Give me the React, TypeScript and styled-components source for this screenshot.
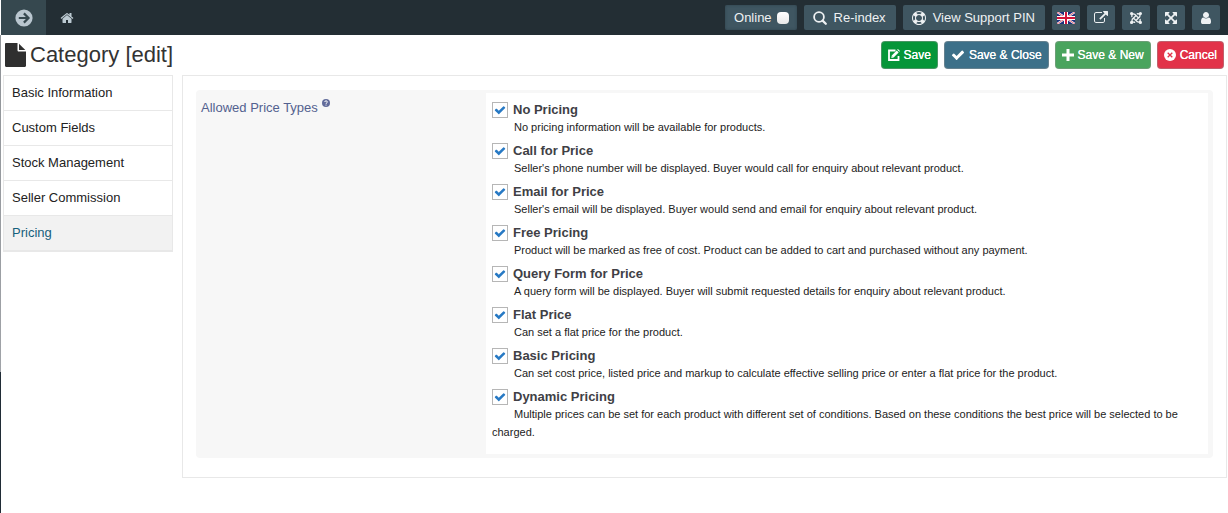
import React from 'react';
import styled, { createGlobalStyle, css } from 'styled-components';

const GlobalStyle = createGlobalStyle`
  *, *::before, *::after { box-sizing: border-box; }
  body {
    margin: 0;
    background: #fff;
    color: #393939;
    font: 13px/18px "Liberation Sans", Arial, Helvetica, sans-serif;
  }
  button, input { font: inherit; margin: 0; }
  svg { display: block; flex: none; }
`;

const Shell = styled.div`
  min-height: 100vh;
  padding-left: 1px;
  background: linear-gradient(#fff 35px, #909498 35px, #a0a3a8 372px, #202c36 372px) 0 0 / 1px 100% no-repeat;
`;

const TopBar = styled.header`
  display: flex;
  align-items: center;
  height: 35px;
  padding-right: 8px;
  background: #232e34;
  color: #eef1f3;
`;

const MenuToggle = styled.button`
  display: flex;
  align-items: center;
  justify-content: center;
  width: 45px;
  height: 35px;
  padding: 0;
  border: 0;
  background: #36484f;
  color: #b9c6cf;
`;

const HomeLink = styled.a`
  padding: 0 14px;
  color: #bccad2;
`;

const Tools = styled.div`
  display: flex;
  gap: 7px;
  margin-left: auto;
`;

const toolLook = css`
  display: flex;
  align-items: center;
  justify-content: center;
  height: 25px;
  border: 0;
  border-radius: 2px;
  background: #3f5661;
  color: #eef1f3;
  white-space: nowrap;
`;

const Tool = styled.button<{ $square?: boolean }>`
  ${toolLook}
  gap: 7px;
  padding: ${(p) => (p.$square ? '0' : '0 10px 0 9px')};
  width: ${(p) => (p.$square ? '28px' : 'auto')};
`;

const OnlineSwitch = styled.label`
  ${toolLook}
  gap: 5px;
  padding: 0 8px 0 9px;
  box-shadow: inset 0 0 3px #2f434d;
`;

const OnlineBox = styled.input`
  appearance: none;
  width: 12px;
  height: 12px;
  border-radius: 4px;
  background: linear-gradient(#fff, #e8e8e8);
`;

const TitleRow = styled.div`
  display: flex;
  align-items: center;
  height: 40px;
  padding: 0 4px;
`;

const Title = styled.h1`
  display: flex;
  align-items: center;
  gap: 4px;
  margin: 0;
  color: #333;
  font-size: 22px;
  line-height: 40px;
  font-weight: 400;
`;

const Actions = styled.div`
  display: flex;
  gap: 6px;
  margin-left: auto;
`;

const Action = styled.button<{ $color: string }>`
  display: flex;
  align-items: center;
  gap: 4px;
  height: 28px;
  padding: 0 6px;
  border: 1px solid rgba(150, 150, 150, 0.45);
  border-radius: 4px;
  background: ${(p) => p.$color};
  color: #fff;
  font-size: 12px;
  text-shadow: 0 0 0 #fff;
  white-space: nowrap;
`;

const Body = styled.div`
  display: flex;
  align-items: flex-start;
  gap: 9px;
  padding: 0 1px 0 2px;
`;

const Side = styled.nav`
  flex: none;
  width: 170px;
  border: 1px solid #e8e8e8;
  border-bottom-width: 2px;
`;

const SideLink = styled.a<{ $active?: boolean }>`
  display: block;
  height: 35px;
  padding: 0 8px;
  line-height: 34px;
  color: ${(p) => (p.$active ? '#16607c' : '#222')};
  background: ${(p) => (p.$active ? '#f2f2f2' : '#fff')};
  text-decoration: none;

  & + & { border-top: 1px solid #e8e8e8; }
  &:first-child { height: 34px; }
`;

const Panel = styled.main`
  flex: 1;
  min-width: 0;
  padding: 14px 13px 19px;
  border: 1px solid #e8e8e8;
`;

const Field = styled.fieldset`
  display: grid;
  grid-template-columns: 285px minmax(0, 1fr);
  margin: 0;
  min-width: 0;
  padding: 3px 5px 4px;
  border: 0;
  border-radius: 4px;
  background: #f7f7f7;
`;

const FieldName = styled.div`
  display: flex;
  gap: 4px;
  padding-top: 6px;
  color: #53618f;
`;

const Help = styled.span`
  color: #626c9b;
`;

const Options = styled.div`
  display: grid;
  gap: 7px;
  padding: 9px 6px 13px;
  background: #fff;
`;

const OptionLabel = styled.label`
  display: flex;
  align-items: center;
  gap: 5px;
  height: 16px;
  color: #404045;
  font-weight: 700;
`;

const Tick = styled.span`
  display: grid;
  width: 16px;
  height: 16px;
  color: #2779c4;

  & > * { grid-area: 1 / 1; place-self: center; pointer-events: none; }
`;

const TickInput = styled.input`
  && { pointer-events: auto; }
  appearance: none;
  width: 16px;
  height: 16px;
  border: 1px solid #b6b6b6;
  background: #fff;

  &:not(:checked) + svg { visibility: hidden; }
`;

const OptionText = styled.p`
  margin: 0;
  color: #222;
  font-size: 11px;
  line-height: 18px;
  text-indent: 22px;
`;

const PATHS = {
  home: 'M1472 992v480q0 26-19 45t-45 19h-384v-384h-256v384h-384q-26 0-45-19t-19-45v-480q0-1 .5-3t.5-3l575-474 575 474q1 2 1 6zm223-69l-62 74q-8 9-21 11h-3q-13 0-21-7l-692-577-692 577q-12 8-24 7-13-2-21-11l-62-74q-8-10-7-23.5t11-21.5l719-599q32-26 76-26t76 26l244 204v-195q0-14 9-23t23-9h192q14 0 23 9t9 23v408l219 182q10 8 11 21.5t-7 23.5z',
  user: 'M1536 1399q0 109-62.5 187t-150.5 78h-854q-88 0-150.5-78t-62.5-187q0-85 8.5-160.5t31.5-152 58.5-131 94-89 134.5-34.5q131 128 313 128t313-128q76 0 134.5 34.5t94 89 58.5 131 31.5 152 8.5 160.5zm-256-887q0 159-112.5 271.5t-271.5 112.5-271.5-112.5-112.5-271.5 112.5-271.5 271.5-112.5 271.5 112.5 112.5 271.5z',
  check: 'M1671 566q0 40-28 68l-724 724-136 136q-28 28-68 28t-68-28l-136-136-362-362q-28-28-28-68t28-68l136-136q28-28 68-28t68 28l294 295 656-657q28-28 68-28t68 28l136 136q28 28 28 68z',
  external: 'M1408 928v320q0 119-84.5 203.5t-203.5 84.5h-832q-119 0-203.5-84.5t-84.5-203.5v-832q0-119 84.5-203.5t203.5-84.5h704q14 0 23 9t9 23v64q0 14-9 23t-23 9h-704q-66 0-113 47t-47 113v832q0 66 47 113t113 47h832q66 0 113-47t47-113v-320q0-14 9-23t23-9h64q14 0 23 9t9 23zm384-864v512q0 26-19 45t-45 19-45-19l-176-176-652 652q-10 10-23 10t-23-10l-114-114q-10-10-10-23t10-23l652-652-176-176q-19-19-19-45t19-45 45-19h512q26 0 45 19t19 45z',
  ring: 'M896 0q182 0 348 71t286 191 191 286 71 348-71 348-191 286-286 191-348 71-348-71-286-191-191-286-71-348 71-348 191-286 286-191 348-71zm0 128q-190 0-361 90l194 194q82-28 167-28t167 28l194-194q-171-90-361-90zm-678 1129l194-194q-28-82-28-167t28-167l-194-194q-90 171-90 361t90 361zm678 407q190 0 361-90l-194-194q-82 28-167 28t-167-28l-194 194q171 90 361 90zm0-384q159 0 271.5-112.5t112.5-271.5-112.5-271.5-271.5-112.5-271.5 112.5-112.5 271.5 112.5 271.5 271.5 112.5zm484-217l194 194q90-171 90-361t-90-361l-194 194q28 82 28 167t-28 167z',
  expand: 'M1411 541l-355 355 355 355 144-144q29-31 70-14 39 17 39 59v448q0 26-19 45t-45 19h-448q-42 0-59-40-17-39 14-69l144-144-355-355-355 355 144 144q31 30 14 69-17 40-59 40h-448q-26 0-45-19t-19-45v-448q0-42 40-59 39-17 69 14l144 144 355-355-355-355-144 144q-19 19-45 19-12 0-24-5-40-17-40-59v-448q0-26 19-45t45-19h448q42 0 59 40 17 39-14 69l-144 144 355 355 355-355-144-144q-31-30-14-69 17-40 59-40h448q26 0 45 19t19 45v448q0 42-39 59-13 5-25 5-26 0-45-19z',
};

const Glyph = ({ name, size }: { name: keyof typeof PATHS; size: number }) => (
  <svg width={size} height={size} viewBox="0 0 1792 1792" fill="currentColor" fillRule="evenodd" aria-hidden="true">
    <path d={PATHS[name]} />
  </svg>
);

const ArrowCircleIcon = () => (
  <svg width="18" height="18" viewBox="0 0 18 18" aria-hidden="true">
    <circle cx="9" cy="9" r="8.6" fill="currentColor" />
    <path d="M3.8 9h9.4M8.9 4.4 13.5 9l-4.6 4.6" fill="none" stroke="#36484f" strokeWidth="2.2" />
  </svg>
);

const SearchIcon = () => (
  <svg width="14" height="14" viewBox="0 0 14 14" fill="none" stroke="currentColor" aria-hidden="true">
    <circle cx="6" cy="6" r="4.9" strokeWidth="1.8" />
    <path d="m9.6 9.6 3.2 3.2" strokeWidth="2.2" strokeLinecap="round" />
  </svg>
);

const FlagIcon = () => (
  <svg width="18" height="12" viewBox="0 0 18 12" aria-hidden="true">
    <path fill="#1c2f7c" d="M0 0h18v12H0z" />
    <path d="m0 0 18 12M18 0 0 12" stroke="#fff" strokeWidth="2" />
    <path d="m0 0 18 12M18 0 0 12" stroke="#d2243b" strokeWidth="0.7" />
    <path d="M9 0v12M0 6h18" stroke="#fff" strokeWidth="4" />
    <path d="M9 0v12M0 6h18" stroke="#d2143a" strokeWidth="2" />
  </svg>
);

const JoomlaIcon = () => (
  <svg width="12" height="12" viewBox="0 0 12 12" fill="none" stroke="currentColor" strokeWidth="1.3" aria-hidden="true">
    <g fill="currentColor" stroke="none">
      <circle cx="1.6" cy="1.6" r="1.6" />
      <circle cx="10.4" cy="1.6" r="1.6" />
      <circle cx="1.6" cy="10.4" r="1.6" />
      <circle cx="10.4" cy="10.4" r="1.6" />
    </g>
    <path d="M1.9 5.2C1.3 2.8 2.8 1.3 4.8 2.3L8.8 6.3M6.8 1.9C9.2 1.3 10.7 2.8 9.7 4.8L5.7 8.8M10.1 6.8c.6 2.4-.9 3.9-2.9 2.9L3.2 5.7M5.2 10.1C2.8 10.7 1.3 9.2 2.3 7.2L6.3 3.2" />
  </svg>
);

const FileIcon = () => (
  <svg width="21" height="24" viewBox="0 0 21 24" fill="#2f2f2f" aria-hidden="true">
    <path d="M1.2 0H12.5v7.2c0 .8.5 1.3 1.3 1.3H21v14.3c0 .7-.5 1.2-1.2 1.2H1.2C.5 24 0 23.5 0 22.8V1.2C0 .5.5 0 1.2 0z" />
    <path d="M14 .8 20.3 7H14z" />
  </svg>
);

const EditIcon = () => (
  <svg width="12" height="12" viewBox="0 0 12 12" fill="none" stroke="currentColor" aria-hidden="true">
    <path d="M7.5 1.5H1v9.5h9.5V7" strokeWidth="1.8" />
    <path d="m4.7 7.5 5-5" strokeWidth="2.6" />
    <path d="m3.3 8.9.5-2.4 1.9 1.9zM9.2.7l.7-.7L12 2.1l-.7.7z" fill="currentColor" stroke="none" />
  </svg>
);

const PlusIcon = () => (
  <svg width="12" height="12" viewBox="0 0 12 12" aria-hidden="true">
    <path d="M6 0v12M0 6h12" stroke="currentColor" strokeWidth="3" />
  </svg>
);

const CancelIcon = () => (
  <svg width="12" height="12" viewBox="0 0 12 12" aria-hidden="true">
    <circle cx="6" cy="6" r="6" fill="currentColor" />
    <path d="m3.7 3.7 4.6 4.6M8.3 3.7 3.7 8.3" stroke="#e23349" strokeWidth="1.3" />
  </svg>
);

const HelpIcon = () => (
  <svg width="8" height="8" viewBox="0 0 8 8" aria-hidden="true">
    <circle cx="4" cy="4" r="4" fill="currentColor" />
    <path d="M2.7 3c0-1.6 2.7-1.5 2.7 0C5.4 3.9 4 3.8 4 4.9M4 5.6v1" fill="none" stroke="#fff" strokeWidth="1" />
  </svg>
);

const SECTIONS = ['Basic Information', 'Custom Fields', 'Stock Management', 'Seller Commission', 'Pricing'];

const PRICE_TYPES = [
  ['No Pricing', 'No pricing information will be available for products.'],
  ['Call for Price', "Seller's phone number will be displayed. Buyer would call for enquiry about relevant product."],
  ['Email for Price', "Seller's email will be displayed. Buyer would send and email for enquiry about relevant product."],
  ['Free Pricing', 'Product will be marked as free of cost. Product can be added to cart and purchased without any payment.'],
  ['Query Form for Price', 'A query form will be displayed. Buyer will submit requested details for enquiry about relevant product.'],
  ['Flat Price', 'Can set a flat price for the product.'],
  ['Basic Pricing', 'Can set cost price, listed price and markup to calculate effective selling price or enter a flat price for the product.'],
  ['Dynamic Pricing', 'Multiple prices can be set for each product with different set of conditions. Based on these conditions the best price will be selected to be charged.'],
];

export default function App() {
  return (
    <Shell>
      <GlobalStyle />
      <TopBar>
        <MenuToggle aria-label="Toggle menu"><ArrowCircleIcon /></MenuToggle>
        <HomeLink href="#" aria-label="Home"><Glyph name="home" size={14} /></HomeLink>
        <Tools>
          <OnlineSwitch>Online<OnlineBox type="checkbox" /></OnlineSwitch>
          <Tool><SearchIcon />Re-index</Tool>
          <Tool><Glyph name="ring" size={14} />View Support PIN</Tool>
          <Tool $square aria-label="Language"><FlagIcon /></Tool>
          <Tool $square aria-label="Open site"><Glyph name="external" size={14} /></Tool>
          <Tool $square aria-label="Joomla"><JoomlaIcon /></Tool>
          <Tool $square aria-label="Full screen"><Glyph name="expand" size={14} /></Tool>
          <Tool $square aria-label="Account"><Glyph name="user" size={14} /></Tool>
        </Tools>
      </TopBar>
      <TitleRow>
        <Title><FileIcon />Category [edit]</Title>
        <Actions>
          <Action $color="#069639"><EditIcon />Save</Action>
          <Action $color="#3d7089"><Glyph name="check" size={14} />Save &amp; Close</Action>
          <Action $color="#4aa45e"><PlusIcon />Save &amp; New</Action>
          <Action $color="#e23349"><CancelIcon />Cancel</Action>
        </Actions>
      </TitleRow>
      <Body>
        <Side>
          {SECTIONS.map((name) => (
            <SideLink key={name} href="#" $active={name === 'Pricing'}>{name}</SideLink>
          ))}
        </Side>
        <Panel>
          <Field aria-labelledby="price-types">
            <FieldName>
              <span id="price-types">Allowed Price Types</span>
              <Help><HelpIcon /></Help>
            </FieldName>
            <Options>
              {PRICE_TYPES.map(([name, text]) => (
                <div key={name}>
                  <OptionLabel>
                    <Tick>
                      <TickInput type="checkbox" defaultChecked />
                      <Glyph name="check" size={12} />
                    </Tick>
                    {name}
                  </OptionLabel>
                  <OptionText>{text}</OptionText>
                </div>
              ))}
            </Options>
          </Field>
        </Panel>
      </Body>
    </Shell>
  );
}
